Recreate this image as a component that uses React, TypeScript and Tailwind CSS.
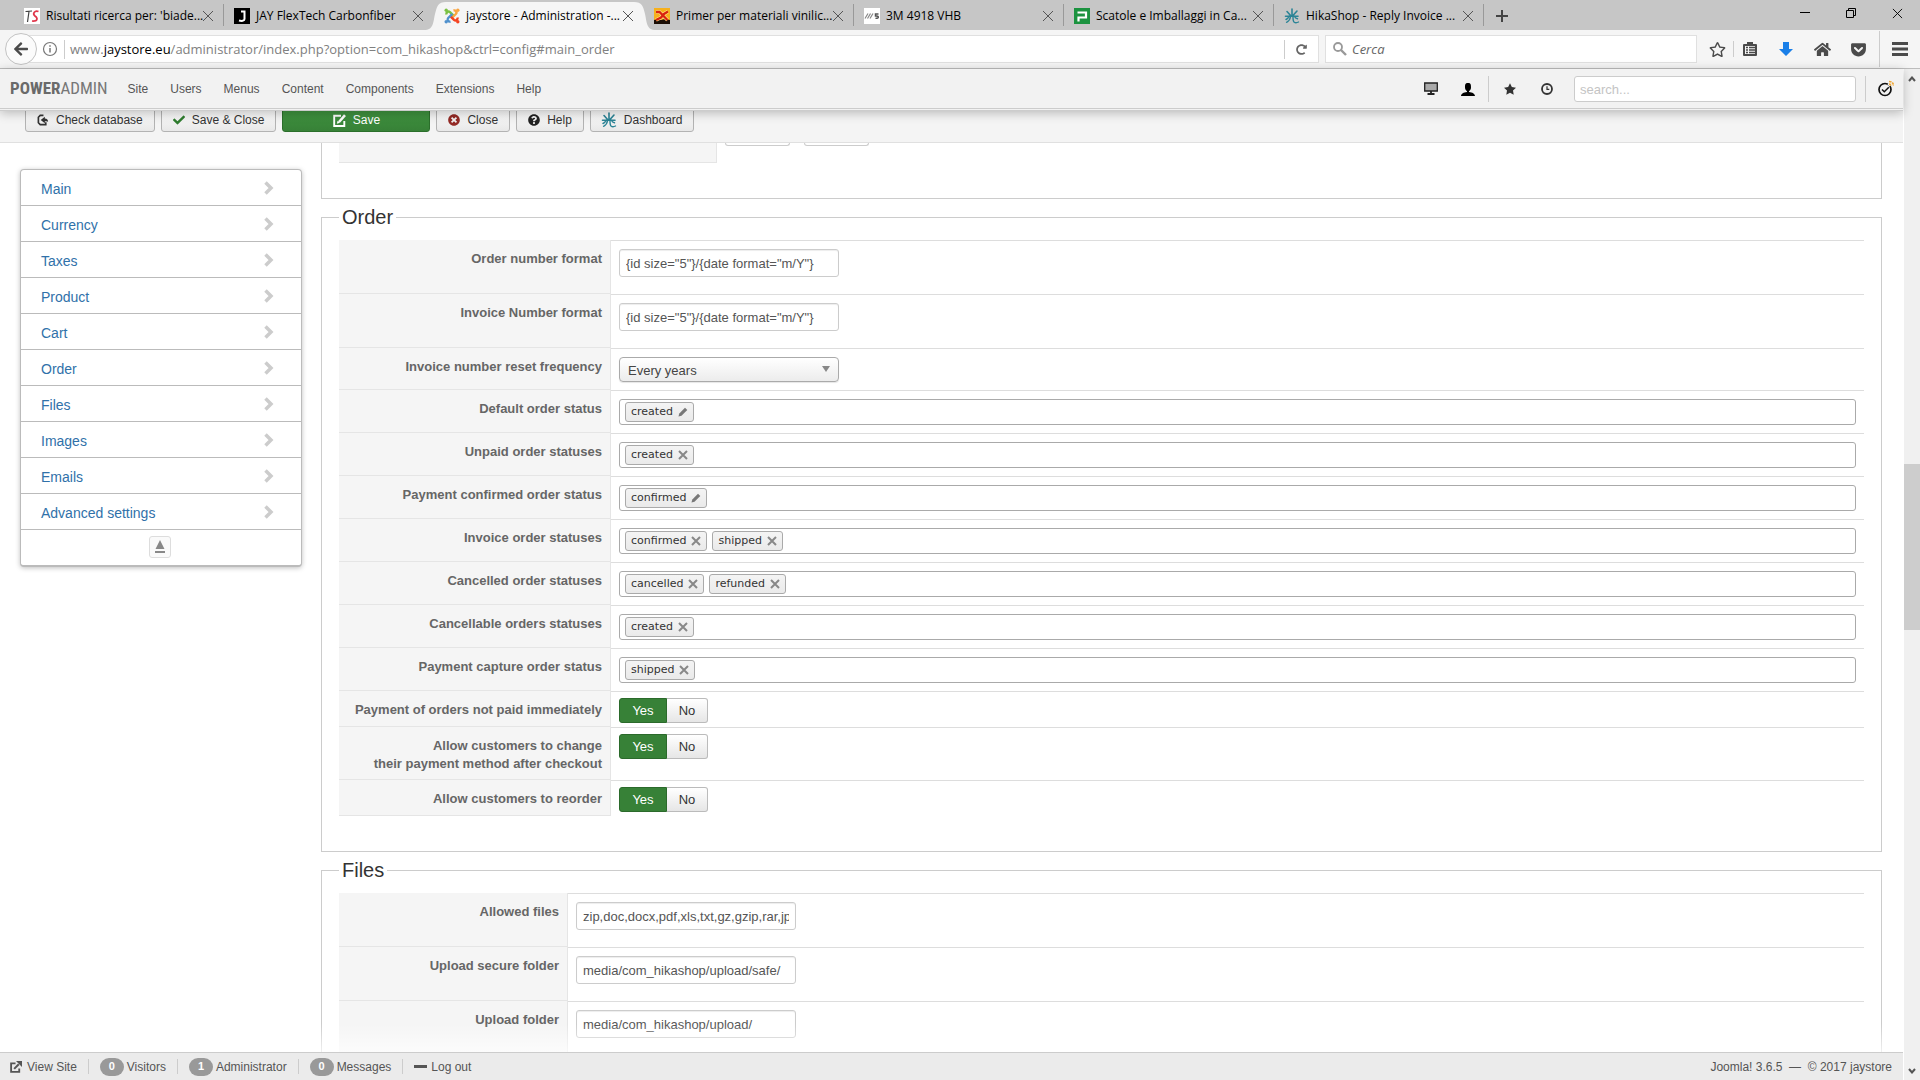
import type { ReactNode } from "react";
import { ImUser, ImStarFull } from "react-icons/im";
import { FaArrowLeft, FaCheck, FaQuestionCircle, FaRegStar, FaTimesCircle, FaHome, FaGetPocket, FaRedoAlt } from "react-icons/fa";

const orderTokens = [
  { id: "default-status", label: "Default order status", tokens: ["created"], editable: true },
  { id: "unpaid-status", label: "Unpaid order statuses", tokens: ["created"] },
  { id: "confirmed-status", label: "Payment confirmed order status", tokens: ["confirmed"], editable: true },
  { id: "invoice-status", label: "Invoice order statuses", tokens: ["confirmed", "shipped"] },
  { id: "cancelled-status", label: "Cancelled order statuses", tokens: ["cancelled", "refunded"] },
  { id: "cancellable-status", label: "Cancellable orders statuses", tokens: ["created"] },
  { id: "capture-status", label: "Payment capture order status", tokens: ["shipped"] },
];

const toggles = [
  { id: "pay-later", lines: ["Payment of orders not paid immediately"] },
  { id: "change-method", lines: ["Allow customers to change", "their payment method after checkout"] },
  { id: "reorder", lines: ["Allow customers to reorder"] },
];

const files = [
  { id: "allowed", label: "Allowed files", value: "zip,doc,docx,pdf,xls,txt,gz,gzip,rar,jpg,gif,png" },
  { id: "secure", label: "Upload secure folder", value: "media/com_hikashop/upload/safe/" },
  { id: "upload", label: "Upload folder", value: "media/com_hikashop/upload/" },
];

const sections = ["Main", "Currency", "Taxes", "Product", "Cart", "Order", "Files", "Images", "Emails", "Advanced settings"];
const menu = ["Site", "Users", "Menus", "Content", "Components", "Extensions", "Help"];

const HikaLogo = ({ className }: { className?: string }) => (
  <svg viewBox="0 0 16 16" className={className} fill="none" stroke="#2b8496" strokeLinecap="round">
    <path d="M8 1v7M3 3.5l3.6 4M13 3l-3.6 4M1.5 8.2H14" strokeWidth="1.6" />
    <path d="M6.6 8.5c-.4 2.6-1.6 4.6-4 5.8M5 8.5c-.6 1.4-1.6 2.4-3 3M9 8.5c0 2.5 0 4.5 1 5.5 1 .8 3 .8 4.5 0M10.5 8.5c.6 1.3 1.5 2 3 2.3" strokeWidth="1.4" />
  </svg>
);

const JoomlaLogo = () => (
  <svg viewBox="0 0 16 16" className="size-4 shrink-0" fill="none" strokeWidth="2.4">
    <path d="M2.5 6.5c-.6-2 1.5-4 3.5-2.3l4 4" stroke="#7ac143" />
    <path d="M9.5 2.5c2-.6 4 1.5 2.3 3.5l-4 4" stroke="#f9a541" />
    <path d="M13.5 9.5c.6 2-1.5 4-3.5 2.3l-4-4" stroke="#f44321" />
    <path d="M6.5 13.5c-2 .6-4-1.5-2.3-3.5l4-4" stroke="#5091cd" />
    <circle cx="2.2" cy="2.2" r="1.7" fill="#7ac143" />
    <circle cx="13.8" cy="2.2" r="1.7" fill="#f9a541" />
    <circle cx="13.8" cy="13.8" r="1.7" fill="#f44321" />
    <circle cx="2.2" cy="13.8" r="1.7" fill="#5091cd" />
  </svg>
);

const TsLogo = () => (
  <svg viewBox="0 0 16 16" className="size-4 shrink-0" fill="none">
    <path d="M0 0h16v16H0z" fill="#fff" />
    <path d="M1.5 3.5L8 3M5 3.500L3.500 14" stroke="#444" strokeWidth="1.2" />
    <path d="M14.5 3.5C11 2 8 5.500 11 8c3 2 3 5.500-3 5" stroke="#e0354a" strokeWidth="1.7" />
  </svg>
);

const JayLogo = () => (
  <svg viewBox="0 0 16 16" className="size-4 shrink-0" fill="none">
    <path d="M0 0h16v16H0z" fill="#000" />
    <path d="M7 3.5h3.5V11c0 2-3 2.200-5.500 1.500" stroke="#fff" strokeWidth="2" />
  </svg>
);

const FlameLogo = () => (
  <svg viewBox="0 0 16 16" className="size-4 shrink-0" fill="none">
    <path d="M0 0h16v16H0z" fill="#f7b01c" />
    <path d="M0 12l4-1 3 1 4-1 5 1v4H0z" fill="#1b0d05" />
    <path d="M2 4h3.500l8 8M14 3.500l-4 2.500-3 3.500-5 2.500" stroke="#ffe98a" strokeWidth="3.600" />
    <path d="M2 4h3.500l8 8M14 3.500l-4 2.500-3 3.500-5 2.500" stroke="#d9230f" strokeWidth="2.400" />
  </svg>
);

const StripeLogo = () => (
  <svg viewBox="0 0 16 16" className="size-4 shrink-0" fill="none">
    <path d="M0 0h16v16H0z" fill="#fff" />
    <path d="M1 10.500L4 5.500M3.500 10.500l3-5M6 10.500l3-5" stroke="#888" strokeWidth="1.200" />
    <path d="M14.500 6h-3v2c4-.5 3.500 3 0 2.200" stroke="#555" strokeWidth="1.500" />
  </svg>
);

const BoxLogo = () => (
  <svg viewBox="0 0 16 16" className="size-4 shrink-0" fill="none">
    <path d="M0 0h16v16H0z" fill="#1c9340" />
    <path d="M4.500 13.500V9.500H12v-5H3.500" stroke="#fff" strokeWidth="2.200" />
  </svg>
);

const tabs = [
  { title: "Risultati ricerca per: 'biade...", icon: <TsLogo /> },
  { title: "JAY FlexTech Carbonfiber", icon: <JayLogo /> },
  { title: "jaystore - Administration -...", icon: <JoomlaLogo />, active: true },
  { title: "Primer per materiali vinilic...", icon: <FlameLogo /> },
  { title: "3M 4918 VHB", icon: <StripeLogo /> },
  { title: "Scatole e Imballaggi in Ca...", icon: <BoxLogo /> },
  { title: "HikaShop - Reply Invoice ...", icon: <HikaLogo className="size-4 shrink-0" /> },
];

const Cross = ({ className }: { className?: string }) => (
  <svg viewBox="0 0 12 12" className={className} fill="none" stroke="currentColor">
    <path d="M1 1l10 10M11 1L1 11" />
  </svg>
);

const TabStrip = () => (
  <div className="flex h-[30px] items-stretch bg-[#c6c6c6] pl-3.5 text-xs text-black">
    {tabs.map((tab, i) => (
      <div
        key={tab.title}
        className={`relative flex w-[210px] items-center pl-2.5 pr-2.5 pt-0.5 ${tab.active ? "z-10" : ""}`}
      >
        {tab.active && (
          <svg viewBox="0 0 232 28" preserveAspectRatio="none" className="absolute -left-[10px] bottom-0 h-7 w-[232px]">
            <path d="M0 28c10 0 9-8 11-16S14 0 22 0h188c8 0 9 4 11 12s1 16 11 16z" fill="#f5f5f5" />
          </svg>
        )}
        <a href="#" className="relative flex min-w-0 flex-1 items-center gap-1.5 whitespace-nowrap">
          {tab.icon}
          <span>{tab.title}</span>
        </a>
        <button aria-label="Close tab" className="relative text-[#555]">
          <Cross className="size-3" />
        </button>
        {!tab.active && i !== 1 && <span className="absolute right-0 top-1 h-[22px] w-px bg-[#999]" />}
      </div>
    ))}
    <button aria-label="New tab" className="ml-3 pt-0.5 text-[#444]">
      <svg viewBox="0 0 12 12" className="size-3" stroke="currentColor" strokeWidth="2">
        <path d="M6 0v12M0 6h12" />
      </svg>
    </button>
    <div className="ml-auto flex items-center gap-9 pb-1 pr-[17px]">
      <button aria-label="Minimize">
        <svg viewBox="0 0 10 10" className="size-2.5" stroke="#000"><path d="M0 4.500h10" /></svg>
      </button>
      <button aria-label="Restore">
        <svg viewBox="0 0 10 10" className="size-2.5" stroke="#000" fill="none">
          <path d="M.5 2.500h7v7h-7zM2.500 2.500v-2h7v7h-2" />
        </svg>
      </button>
      <button aria-label="Close window"><Cross className="size-[11px]" /></button>
    </div>
  </div>
);

const Divider = ({ className }: { className: string }) => <span className={`w-px shrink-0 bg-[#ccc] ${className}`} />;

const AddressBar = () => (
  <div className="flex h-[39px] items-center border-b border-[#bdbdbd] bg-[#f5f5f5] text-[#4b4b4b]">
    <button aria-label="Back" className="relative z-10 ml-[5px] flex size-8 shrink-0 items-center justify-center rounded-full border border-[#c3c3c3] bg-[#fbfbfb]">
      <FaArrowLeft className="size-4" />
    </button>
    <div className="-ml-4 flex h-7 flex-1 items-center border border-[#e0e0e0] bg-white pl-5">
      <svg viewBox="0 0 16 16" className="size-4 shrink-0" fill="none" stroke="#777">
        <circle cx="8" cy="8" r="6.500" strokeWidth="1.200" />
        <path d="M8 7v4.500M8 4.200v1.600" strokeWidth="1.500" />
      </svg>
      <Divider className="ml-1.5 h-[19px]" />
      <div role="textbox" aria-label="Address" className="flex-1 pl-[5px] pt-0.5 text-[13px] text-[#808080]">
        www.<span className="text-black">jaystore.eu</span>/administrator/index.php?option=com_hikashop&amp;ctrl=config#main_order
      </div>
      <Divider className="h-[19px]" />
      <button aria-label="Reload" className="px-[11px]"><FaRedoAlt className="size-[11px] text-[#666]" /></button>
    </div>
    <div className="ml-1.5 flex h-7 w-[372px] items-center gap-[5px] border border-[#e0e0e0] bg-white pl-[7px]">
      <svg viewBox="0 0 14 14" className="size-3.5" fill="none" stroke="#999">
        <circle cx="5" cy="5" r="4" strokeWidth="1.800" />
        <path d="M8 8l5 5" strokeWidth="2.400" />
      </svg>
      <input aria-label="Cerca" placeholder="Cerca" className="min-w-0 flex-1 pt-0.5 text-[13px] outline-none placeholder:italic placeholder:text-[#666]" />
    </div>
    <button aria-label="Bookmark" className="ml-3"><FaRegStar className="size-[17px]" /></button>
    <Divider className="ml-[7px] h-4" />
    <button aria-label="Library" className="ml-2">
      <svg viewBox="0 0 16 16" className="size-4" fill="none" stroke="currentColor" strokeWidth="2">
        <path d="M2 4h12v10H2z" strokeLinejoin="round" />
        <path d="M5 2.500h6" strokeWidth="3" />
        <path d="M4 6.500h2M7 6.500h6M4 9h2M7 9h6M4 11.500h2M7 11.500h6" strokeWidth="1.300" />
      </svg>
    </button>
    <button aria-label="Downloads" className="ml-5">
      <svg viewBox="0 0 16 16" className="size-4" fill="#1a7fe8"><path d="M5 1h6v7h4l-7 7-7-7h4z" /></svg>
    </button>
    <button aria-label="Home" className="ml-5"><FaHome className="size-[17px]" /></button>
    <button aria-label="Pocket" className="ml-[19px]"><FaGetPocket className="size-[17px]" /></button>
    <Divider className="ml-3 h-[36px]" />
    <button aria-label="Menu" className="ml-3 mr-3">
      <svg viewBox="0 0 16 14" className="h-3.5 w-4" stroke="currentColor" strokeWidth="3">
        <path d="M0 1.500h16M0 7h16M0 12.500h16" />
      </svg>
    </button>
  </div>
);

const AdminHeader = () => (
  <header className="relative z-20 flex h-[42px] items-center border-b-[3px] border-double border-[#ccc] bg-[#f2f2f2] pl-2.5 text-xs text-[#555] shadow-[0_2px_10px_rgba(0,0,0,0.25)]">
    <a href="#" className="mr-[9px] font-['Liberation_Sans_Narrow','Roboto_Condensed',sans-serif] text-[17px] text-[#777]">
      <b className="text-[#6a6a6a]">POWER</b>ADMIN
    </a>
    <nav className="flex">
      {menu.map((item) => (
        <a key={item} href="#" className="px-[11px]">{item}</a>
      ))}
    </nav>
    <div className="ml-auto flex items-center">
      <button aria-label="Display" className="mr-[22px]">
        <svg viewBox="0 0 14 13" className="h-[13px] w-3.5" fill="none" stroke="#222">
          <path d="M.7 1h12.600v8H.7z" fill="#aaa" strokeWidth="1.300" />
          <path d="M7 9v2.500M3.500 12h7" strokeWidth="1.800" />
        </svg>
      </button>
      <button aria-label="User" className="text-black"><ImUser className="size-4" /></button>
      <Divider className="ml-3 h-[26px]" />
      <button aria-label="Favorites" className="ml-[15px] text-[#333]"><ImStarFull className="size-3" /></button>
      <button aria-label="History" className="ml-[25px]">
        <svg viewBox="0 0 12 12" className="size-3" fill="none" stroke="#333">
          <circle cx="6" cy="6" r="5" strokeWidth="1.800" />
          <path d="M6 3.200V6.300h2.300" strokeWidth="1.200" />
        </svg>
      </button>
      <input
        aria-label="Search"
        placeholder="search..."
        className="ml-[21px] h-[26px] w-[282px] rounded-[3px] border border-[#ccc] bg-white px-[5px] pt-0.5 text-[13px] outline-none placeholder:text-[#c4c4c4]"
      />
      <Divider className="ml-[9px] h-[26px]" />
      <button aria-label="Updates" className="ml-3 mr-[9px]">
        <svg viewBox="0 0 16 17" className="h-[17px] w-4" fill="none">
          <circle cx="7" cy="9.500" r="6" stroke="#111" strokeWidth="1.700" />
          <path d="M4 9.500l2.300 2.300 4.500-4.500" stroke="#111" strokeWidth="1.500" />
          <path d="M10.500 3.500l2 2M12.500 1.500l3 3" stroke="#f2f2f2" strokeWidth="3" />
          <path d="M11 1.500c2.800 0 4.500 1.700 4.500 4.500M11 4.200c1.200 0 1.800.6 1.800 1.800" stroke="#f0a93a" strokeWidth="1.700" strokeDasharray="2.500 .8" />
        </svg>
      </button>
    </div>
  </header>
);

const PencilIcon = () => (
  <svg viewBox="0 0 13 13" className="size-[13px]" fill="none" stroke="currentColor">
    <path d="M8 1.700H1.200v10.300H11.300V7" strokeWidth="1.900" />
    <path d="M12 1.200L6 8" strokeWidth="2.600" />
    <path d="M3.800 9.800l.8-3 2.400 2z" fill="currentColor" stroke="none" />
  </svg>
);

const ExternalIcon = () => (
  <svg viewBox="0 0 13 13" className="size-3" fill="none" stroke="currentColor">
    <path d="M6 2.500H1.200v9.300H10V8" strokeWidth="2" />
    <path d="M4.500 8.500l5-5" strokeWidth="2.200" />
    <path d="M6.500 0H13v6.500z" fill="currentColor" stroke="none" />
  </svg>
);

const ToolButton = ({ icon, children, className }: { icon: ReactNode; children: ReactNode; className?: string }) => (
  <button
    className={`flex h-[25px] items-center justify-center gap-[7px] rounded-[3px] border pt-px ${className ?? "border-[#b3b3b3] bg-linear-to-b from-white to-[#e8e8e8] px-[11px] text-[#333]"}`}
  >
    {icon}
    {children}
  </button>
);

const Toolbar = () => (
  <div className="flex h-8 shrink-0 items-start border-b border-[#e0e0e0] bg-[#f4f4f4] pl-[25px] text-xs">
    <div className="-mt-1 flex gap-1.5">
      <ToolButton
        icon={
          <svg viewBox="0 0 13 13" className="size-3" fill="none" stroke="#333">
            <path d="M7 1.500H3.500l-2 2v6l2 2h6V9" strokeWidth="1.800" />
            <path d="M4 6.500L8.500 3v2c2.500 0 3.500 1.500 3.500 3.500C11 7.800 10 7.800 8.500 8v2z" fill="#333" stroke="none" />
          </svg>
        }
      >
        Check database
      </ToolButton>
      <ToolButton icon={<FaCheck className="size-3 text-[#2f7d2f]" />}>Save &amp; Close</ToolButton>
      <ToolButton icon={<PencilIcon />} className="w-[148px] border-[#2b6f2b] bg-linear-to-b from-[#419641] to-[#378137] text-white">
        Save
      </ToolButton>
      <ToolButton icon={<FaTimesCircle className="size-3 text-[#942a25]" />}>Close</ToolButton>
      <ToolButton icon={<FaQuestionCircle className="size-3 text-[#222]" />}>Help</ToolButton>
      <ToolButton icon={<HikaLogo className="size-4" />} className="border-[#b3b3b3] bg-linear-to-b from-white to-[#e8e8e8] px-2.5 text-[#333]">
        Dashboard
      </ToolButton>
    </div>
  </div>
);

const Sidebar = () => (
  <nav className="w-[282px] shrink-0 rounded border border-b-2 border-[#bbb] bg-white text-sm text-[#3071a9] shadow-[0_1px_5px_rgba(0,0,0,0.25)]">
    {sections.map((name) => (
      <a key={name} href="#" className="flex h-9 items-center justify-between border-b border-[#bbb] pl-5 pr-[27px]">
        <span className="pt-0.5">{name}</span>
        <svg viewBox="0 0 10 14" className="h-3.5 w-2.5" fill="none" stroke="#ccc" strokeWidth="3.500">
          <path d="M1.500 1.500L7 7l-5.500 5.500" />
        </svg>
      </a>
    ))}
    <div className="flex h-[35px] items-center justify-center pb-0.5 pr-0.5">
      <button aria-label="Collapse" className="flex h-[22px] w-[22px] items-center justify-center rounded-[3px] border border-[#ddd] bg-[#fafafa]">
        <svg viewBox="0 0 10 14" className="h-3.5 w-2.5" fill="#888">
          <path d="M5 0l4.500 9H.5zM0 11h10v2H0z" />
        </svg>
      </button>
    </div>
  </nav>
);

const Row = ({ id, label, children, pad = "p-2" }: { id: string; label: ReactNode; children: ReactNode; pad?: string }) => (
  <tr className="h-9">
    <th scope="row" className="border-r border-b border-[#e5e5e5] bg-[#f5f5f5] px-2 pt-2.5 pb-1.5 text-right align-top leading-[18px] font-bold text-[#666]">
      <label htmlFor={id}>{label}</label>
    </th>
    <td className={`border-t border-[#ddd] align-top ${pad}`}>{children}</td>
  </tr>
);

const TextField = ({ id, value }: { id: string; value: string }) => (
  <input
    id={id}
    defaultValue={value}
    className="mb-[9px] block h-7 w-[220px] rounded-[3px] border border-[#ccc] bg-white px-1.5 text-[13px] text-[#555] shadow-[inset_0_1px_1px_rgba(0,0,0,0.075)] outline-none"
  />
);

const TokenField = ({ id, tokens, editable }: { id: string; tokens: string[]; editable?: boolean }) => (
  <div className="flex h-[26px] items-center gap-[5px] rounded-[3px] border border-[#aaa] bg-white pl-[5px]">
    {tokens.map((token) => (
      <span
        key={token}
        className="flex h-5 items-center gap-[5px] rounded-[3px] border border-[#aaa] bg-linear-to-b from-[#f4f4f4] to-[#eaeaea] px-[5px] font-['DejaVu_Sans',sans-serif] text-[11px] text-[#333]"
      >
        {token}
        <button aria-label={editable ? "Edit" : "Remove"} className="text-[#888]">
          {editable ? (
            <svg viewBox="0 0 10 10" className="size-2.5" fill="#777">
              <path d="M.5 9.500l.8-3L7 .8 9.300 3 3.500 8.700z" />
            </svg>
          ) : (
            <svg viewBox="0 0 10 10" className="size-2.5" stroke="currentColor" strokeWidth="2">
              <path d="M1 1l8 8M9 1L1 9" />
            </svg>
          )}
        </button>
      </span>
    ))}
    <input id={id} className="min-w-0 flex-1 outline-none" />
  </div>
);

const YesNo = ({ id }: { id: string }) => (
  <div className="flex h-[25px] w-fit text-[13px]">
    <label className="relative flex w-12 items-center justify-center rounded-l-[3px] border border-[#2b6a2b] bg-[#378137] text-white">
      <input id={id} type="radio" name={id} defaultChecked className="sr-only" />
      Yes
    </label>
    <label className="relative flex w-[41px] items-center justify-center rounded-r-[3px] border border-l-0 border-[#bbb] bg-linear-to-b from-white to-[#e6e6e6] text-[#333]">
      <input type="radio" name={id} className="sr-only" />
      No
    </label>
  </div>
);

const Fieldset = ({ legend, children }: { legend: string; children: ReactNode }) => (
  <fieldset className="border border-[#ccc] px-[17px] pb-[35px]">
    <legend className="px-[3px] text-xl leading-9 text-[#333]">{legend}</legend>
    {children}
  </fieldset>
);

const Settings = () => (
  <main className="min-w-0 flex-1 text-[13px]">
    <section className="flex h-14 items-start border border-t-0 border-[#ccc] px-[17px]">
      <div className="h-5 w-[378px] border-r border-b border-[#e5e5e5] bg-[#f5f5f5]" />
      <div className="ml-2 h-[3px] w-[65px] rounded-b-[3px] border border-t-0 border-[#ccc]" />
      <div className="ml-3.5 h-[3px] w-[65px] rounded-b-[3px] border border-t-0 border-[#ccc]" />
    </section>

    <Fieldset legend="Order">
      <table className="mt-[5px] w-full border-separate border-spacing-0">
        <colgroup>
          <col className="w-[272px]" />
          <col />
        </colgroup>
        <tbody>
          <Row id="order-format" label="Order number format">
            <TextField id="order-format" value={'{id size="5"}/{date format="m/Y"}'} />
          </Row>
          <Row id="invoice-format" label="Invoice Number format">
            <TextField id="invoice-format" value={'{id size="5"}/{date format="m/Y"}'} />
          </Row>
          <Row id="reset" label="Invoice number reset frequency">
            <div className="relative w-[220px]">
              <select
                id="reset"
                className="block h-[25px] w-full appearance-none rounded border border-[#aaa] bg-linear-to-b from-white to-[#ececec] px-2 pt-0.5 text-[13px] text-[#444] shadow-[0_1px_1px_rgba(0,0,0,0.1)]"
              >
                <option>Every years</option>
              </select>
              <svg viewBox="0 0 8 6" className="pointer-events-none absolute right-[9px] top-[9px] h-1.5 w-2" fill="#888">
                <path d="M0 0h8L4 6z" />
              </svg>
            </div>
          </Row>
          {orderTokens.map((row) => (
            <Row key={row.id} id={row.id} label={row.label}>
              <TokenField id={row.id} tokens={row.tokens} editable={row.editable} />
            </Row>
          ))}
          {toggles.map((row) => (
            <Row
              key={row.id}
              id={row.id}
              pad="pt-1.5 pb-[3px] pl-2"
              label={row.lines.map((line) => <span key={line} className="block">{line}</span>)}
            >
              <YesNo id={row.id} />
            </Row>
          ))}
        </tbody>
      </table>
    </Fieldset>

    <Fieldset legend="Files">
      <table className="mt-[5px] w-full border-separate border-spacing-0">
        <colgroup>
          <col className="w-[229px]" />
          <col />
        </colgroup>
        <tbody>
          {files.map((row) => (
            <Row key={row.id} id={row.id} label={row.label}>
              <TextField id={row.id} value={row.value} />
            </Row>
          ))}
        </tbody>
      </table>
    </Fieldset>
  </main>
);

const Badge = ({ children }: { children: ReactNode }) => (
  <span className="mr-[3px] flex h-[18px] w-6 items-center justify-center rounded-full bg-[#999] text-[11px] font-bold text-white">{children}</span>
);

const StatusBar = () => (
  <footer className="z-20 flex h-7 shrink-0 items-center border-t border-[#ccc] bg-[#ebebeb] pl-2.5 pr-[11px] text-xs text-[#555]">
    <a href="#" className="flex items-center gap-[5px]"><ExternalIcon />View Site</a>
    <Divider className="mx-[11px] h-[15px]" />
    <Badge>0</Badge>Visitors
    <Divider className="mx-[11px] h-[15px]" />
    <Badge>1</Badge>Administrator
    <Divider className="mx-[11px] h-[15px]" />
    <Badge>0</Badge>Messages
    <Divider className="mx-[11px] h-[15px]" />
    <a href="#" className="flex items-center gap-1"><span className="h-[3px] w-[13px] bg-[#555]" />Log out</a>
    <span className="ml-auto">Joomla! 3.6.5 &nbsp;—&nbsp; © 2017 jaystore</span>
  </footer>
);

const ScrollBar = () => (
  <div className="flex w-[17px] shrink-0 flex-col items-center border-l border-white bg-[#f0f0f0]">
    <svg viewBox="0 0 8 6" className="mt-[7px] h-1.5 w-2" fill="none" stroke="#555" strokeWidth="2"><path d="M1 5l3-3.500L7 5" /></svg>
    <div className="flex w-full flex-1 flex-col">
      <div className="grow-[381]" />
      <div className="w-full grow-[166] bg-[#cdcdcd]" />
      <div className="grow-[437]" />
    </div>
    <svg viewBox="0 0 8 6" className="mb-1.5 h-1.5 w-2" fill="none" stroke="#555" strokeWidth="2"><path d="M1 1l3 3.500L7 1" /></svg>
  </div>
);

export default function App() {
  return (
    <div className="flex h-screen flex-col overflow-hidden bg-white font-['Liberation_Sans',Arial,sans-serif]">
      <div className="shrink-0 font-['Open_Sans','Noto_Sans',sans-serif]">
        <TabStrip />
        <AddressBar />
      </div>
      <div className="flex min-h-0 flex-1">
        <div className="flex min-w-0 flex-1 flex-col">
          <AdminHeader />
          <Toolbar />
          <div className="relative flex min-h-0 flex-1 items-start overflow-hidden pl-5 pr-[21px]">
            <div className="shrink-0 pt-[26px]"><Sidebar /></div>
            <div className="flex min-w-0 flex-1 pl-[19px]"><Settings /></div>
            <div className="pointer-events-none absolute inset-x-0 bottom-0 h-7 bg-linear-to-b from-white/0 to-white/70" />
          </div>
          <StatusBar />
        </div>
        <ScrollBar />
      </div>
    </div>
  );
}
